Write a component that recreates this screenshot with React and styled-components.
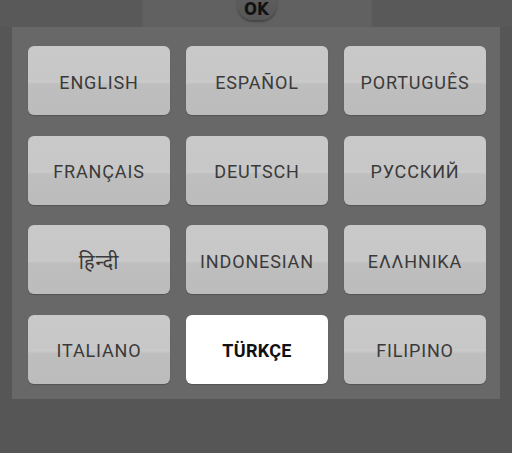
import styled, { createGlobalStyle } from 'styled-components';

const GlobalStyle = createGlobalStyle`
	html, body {
		margin: 0;
		padding: 0;
		background: #565656;
		font-family: Roboto, "Noto Sans", "Noto Sans Devanagari", sans-serif;
	}
`;

const Screen = styled.div`
	width: 512px;
	height: 453px;
	background: #565656;
	overflow: hidden;
`;

const TopBar = styled.div`
	height: 27px;
	display: flex;
	justify-content: center;
	background: #595959;
`;

const Tab = styled.div`
	width: 228px;
	margin-left: 1px;
	background: #616161;
	display: flex;
	justify-content: center;
	border-left: 1px solid #5e5e5e;
	border-right: 1px solid #5e5e5e;
`;

const OkButton = styled.div`
	width: 40px;
	height: 23px;
	margin-top: -3px;
	border-radius: 0 0 16px 16px;
	background: linear-gradient(#5d5d5d, #565656);
	box-shadow: 0 2px 2px rgba(0, 0, 0, 0.3);
	display: flex;
	align-items: center;
	justify-content: center;
	padding-top: 1px;
	box-sizing: border-box;
	font-family: "DejaVu Sans Condensed", "DejaVu Sans", sans-serif;
	font-stretch: condensed;
	font-weight: bold;
	font-size: 17px;
	color: #121212;
`;

const Panel = styled.div`
	margin-left: 12px;
	width: 488px;
	box-sizing: border-box;
	padding: 19px 14px 15px 16px;
	background: #686868;
	display: grid;
	grid-template-columns: repeat(3, 142px);
	grid-template-rows: repeat(4, 69px);
	column-gap: 16px;
	row-gap: 20.5px;
`;

const LangButton = styled.div`
	border-radius: 6px;
	display: flex;
	align-items: center;
	justify-content: center;
	padding-top: 3px;
	font-size: ${p => (p.$script ? '20px' : '18px')};
	letter-spacing: ${p => (p.$active ? '0.3px' : '0.85px')};
	font-weight: ${p => (p.$active ? 'bold' : 'normal')};
	color: ${p => (p.$active ? '#111' : '#3a3a3a')};
	background: ${p =>
		p.$active
			? '#ffffff'
			: 'linear-gradient(#c9c9c9 0%, #c7c7c7 49%, #cbcbcb 51%, #bebebe 56%, #bcbcbc 100%)'};
	box-shadow: 0 1px 1px rgba(0, 0, 0, 0.2);
`;

const languages = [
	{ name: 'ENGLISH' },
	{ name: 'ESPAÑOL' },
	{ name: 'PORTUGUÊS' },
	{ name: 'FRANÇAIS' },
	{ name: 'DEUTSCH' },
	{ name: 'РУССКИЙ' },
	{ name: 'हिन्दी', script: true },
	{ name: 'INDONESIAN' },
	{ name: 'ΕΛΛΗΝΙΚΑ' },
	{ name: 'ITALIANO' },
	{ name: 'TÜRKÇE', active: true },
	{ name: 'FILIPINO' },
];

const App = () => (
	<Screen>
		<GlobalStyle />
		<TopBar>
			<Tab>
				<OkButton>OK</OkButton>
			</Tab>
		</TopBar>
		<Panel>
			{languages.map(lang => (
				<LangButton key={lang.name} $active={lang.active} $script={lang.script}>
					{lang.name}
				</LangButton>
			))}
		</Panel>
	</Screen>
);

export default App;
